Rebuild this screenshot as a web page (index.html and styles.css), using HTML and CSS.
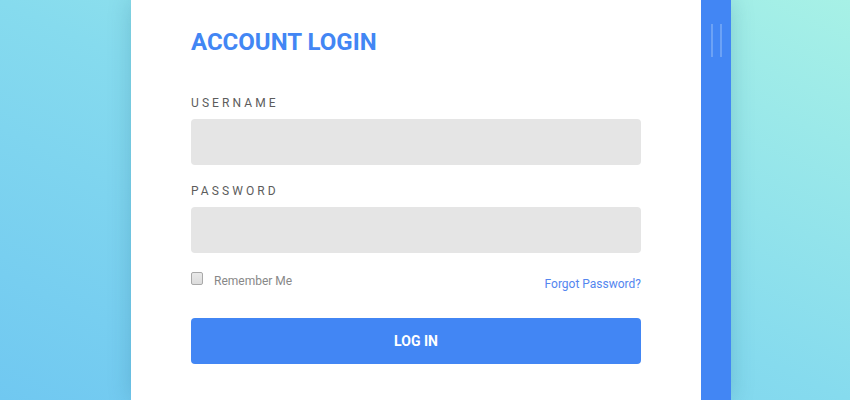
FILE: index.html
```html
<!DOCTYPE html>
<html>
<head>
<meta charset="utf-8">
<link rel="stylesheet" href="styles.css">
</head>
<body>
<div class="stage">
  <div class="card">
    <form class="form">
      <h1 class="title">ACCOUNT LOGIN</h1>
      <label class="label" for="u">USERNAME</label>
      <input class="field" id="u" type="text">
      <label class="label" for="p">PASSWORD</label>
      <input class="field" id="p" type="password">
      <div class="row">
        <label class="remember"><input class="check" type="checkbox"><span>Remember Me</span></label>
        <a class="forgot" href="#">Forgot Password?</a>
      </div>
      <button class="btn" type="button">LOG IN</button>
    </form>
    <div class="strip">
      <span class="bar"></span>
      <span class="bar"></span>
    </div>
  </div>
</div>
</body>
</html>
```
FILE: styles.css
```css
html, body {
  margin: 0;
  padding: 0;
  height: 400px;
  overflow: hidden;
}
body {
  font-family: Roboto, "Liberation Sans", sans-serif;
  background: linear-gradient(to top right, #70c8f1 0%, #86dbee 50%, #a7f1e6 100%);
}
.stage {
  height: 400px;
  display: flex;
  padding-left: 131px;
}
.card {
  display: flex;
  height: 400px;
  box-shadow: 0 0 22px rgba(20, 80, 110, 0.22);
}
.form {
  width: 450px;
  background: #fff;
  padding: 28px 60px 0 60px;
  display: flex;
  flex-direction: column;
}
.title {
  margin: 0 0 40px 0;
  font-size: 24px;
  line-height: 28px;
  font-weight: 700;
  color: #4286f4;
}
.label {
  font-size: 12px;
  line-height: 14px;
  letter-spacing: 3.1px;
  color: #5c5c5c;
  margin-bottom: 9px;
}
.field {
  display: block;
  box-sizing: border-box;
  width: 450px;
  height: 46px;
  border: none;
  border-radius: 4px;
  background: #e5e5e5;
  margin: 0 0 19px 0;
  padding: 0 14px;
  font: inherit;
}
.row {
  display: flex;
  justify-content: space-between;
  align-items: center;
  margin-top: -4px;
  height: 26px;
}
.remember {
  display: flex;
  align-items: center;
  font-size: 12px;
  color: #888;
}
.check {
  appearance: none;
  -webkit-appearance: none;
  box-sizing: border-box;
  width: 12px;
  height: 13px;
  margin: 0 11px -1px 0;
  border: 1px solid #a9a9a9;
  border-radius: 2px;
  background: linear-gradient(#e9e9e9, #dcdcdc);
  position: relative;
  top: -3px;
}
.forgot {
  font-size: 12px;
  color: #5486ef;
  text-decoration: none;
  position: relative;
  top: 3px;
}
.btn {
  margin-top: 24px;
  width: 450px;
  height: 46px;
  border: none;
  border-radius: 4px;
  background: #4286f4;
  color: #fff;
  font-family: Roboto, "Liberation Sans", sans-serif;
  font-weight: 700;
  font-size: 14px;
}
.strip {
  width: 30px;
  background: #4286f4;
  display: flex;
  justify-content: center;
  gap: 7px;
  padding-top: 24px;
  box-sizing: border-box;
}
.bar {
  width: 2px;
  height: 33px;
  background: #6ca2f6;
}
```
